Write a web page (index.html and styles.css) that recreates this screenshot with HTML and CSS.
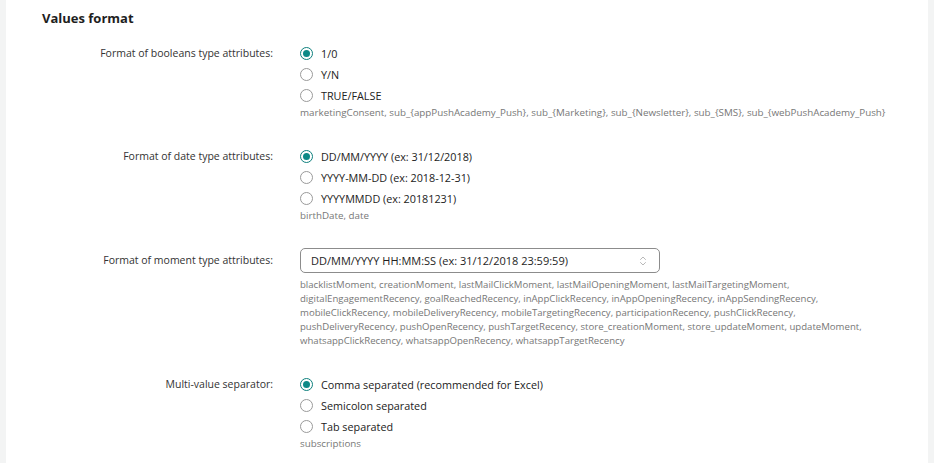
FILE: index.html
```html
<!DOCTYPE html>
<html lang="en">
<head>
<meta charset="utf-8">
<title>Values format</title>
<link rel="stylesheet" href="styles.css">
</head>
<body>
<div class="panel">
  <h2 class="title">Values format</h2>
  <div class="sections">
    <div class="row">
      <div class="label">Format of booleans type attributes:</div>
      <div class="control">
        <div class="opt"><span class="radio checked"></span><span>1/0</span></div>
        <div class="opt"><span class="radio"></span><span>Y/N</span></div>
        <div class="opt"><span class="radio"></span><span>TRUE/FALSE</span></div>
        <div class="hint">marketingConsent, sub_{appPushAcademy_Push}, sub_{Marketing}, sub_{Newsletter}, sub_{SMS}, sub_{webPushAcademy_Push}</div>
      </div>
    </div>
    <div class="row">
      <div class="label">Format of date type attributes:</div>
      <div class="control">
        <div class="opt"><span class="radio checked"></span><span>DD/MM/YYYY (ex: 31/12/2018)</span></div>
        <div class="opt"><span class="radio"></span><span>YYYY-MM-DD (ex: 2018-12-31)</span></div>
        <div class="opt"><span class="radio"></span><span>YYYYMMDD (ex: 20181231)</span></div>
        <div class="hint">birthDate, date</div>
      </div>
    </div>
    <div class="row row-select">
      <div class="label label-select">Format of moment type attributes:</div>
      <div class="control">
        <div class="select">
          <span>DD/MM/YYYY HH:MM:SS (ex: 31/12/2018 23:59:59)</span>
          <svg class="chev" width="8" height="12" viewBox="0 0 8 12"><path d="M1.5 4.5 L4 2 L6.5 4.5 M1.5 7.5 L4 10 L6.5 7.5" fill="none" stroke="#b8b8b8" stroke-width="1" stroke-linecap="round" stroke-linejoin="round"/></svg>
        </div>
        <div class="hint hint-multi">blacklistMoment, creationMoment, lastMailClickMoment, lastMailOpeningMoment, lastMailTargetingMoment,<br>digitalEngagementRecency, goalReachedRecency, inAppClickRecency, inAppOpeningRecency, inAppSendingRecency,<br>mobileClickRecency, mobileDeliveryRecency, mobileTargetingRecency, participationRecency, pushClickRecency,<br>pushDeliveryRecency, pushOpenRecency, pushTargetRecency, store_creationMoment, store_updateMoment, updateMoment,<br>whatsappClickRecency, whatsappOpenRecency, whatsappTargetRecency</div>
      </div>
    </div>
    <div class="row">
      <div class="label">Multi-value separator:</div>
      <div class="control">
        <div class="opt"><span class="radio checked"></span><span>Comma separated (recommended for Excel)</span></div>
        <div class="opt"><span class="radio"></span><span>Semicolon separated</span></div>
        <div class="opt"><span class="radio"></span><span>Tab separated</span></div>
        <div class="hint">subscriptions</div>
      </div>
    </div>
  </div>
</div>
</body>
</html>
```

FILE: styles.css
```css
html, body {
  margin: 0;
  padding: 0;
  background: #f3f4f4;
  font-family: "Open Sans", "Noto Sans", sans-serif;
  color: #2a2a2a;
}
.panel {
  margin-left: 6px;
  width: 922px;
  height: 463px;
  background: #ffffff;
  padding-top: 8px;
  box-sizing: border-box;
}
.title {
  margin: 0 0 0 36px;
  font-size: 13px;
  font-weight: 700;
  line-height: 20px;
  color: #1e1e1e;
}
.sections {
  margin-top: 15px;
  display: flex;
  flex-direction: column;
  gap: 26px;
}
.row {
  display: flex;
  align-items: flex-start;
}
.row-select {
  margin-top: -1px;
}
.label {
  width: 267px;
  text-align: right;
  font-size: 10.5px;
  line-height: 21px;
  color: #333;
  flex-shrink: 0;
}
.label-select {
  line-height: 25px;
}
.control {
  margin-left: 27px;
  display: flex;
  flex-direction: column;
}
.opt {
  display: flex;
  align-items: center;
  height: 21px;
  font-size: 10.8px;
  color: #222;
}
.radio {
  width: 13px;
  height: 13px;
  box-sizing: border-box;
  border: 1px solid #9a9a9a;
  border-radius: 50%;
  margin-right: 8px;
  flex-shrink: 0;
  position: relative;
}
.radio.checked {
  border: 1.5px solid #0d7f7d;
}
.radio.checked::after {
  content: "";
  position: absolute;
  left: 1.5px;
  top: 1.5px;
  width: 7px;
  height: 7px;
  border-radius: 50%;
  background: #0d8a87;
}
.hint {
  font-size: 9.8px;
  line-height: 14px;
  color: #777;
  white-space: nowrap;
}
.hint-multi {
  margin-top: 5px;
  font-size: 9.6px;
}
.select {
  width: 360px;
  height: 25px;
  box-sizing: border-box;
  border: 1px solid #8c8c8c;
  border-radius: 5px;
  display: flex;
  align-items: center;
  justify-content: space-between;
  padding: 0 12px 0 10px;
  font-size: 11px;
  color: #1e1e1e;
}
.chev {
  display: block;
}
```
